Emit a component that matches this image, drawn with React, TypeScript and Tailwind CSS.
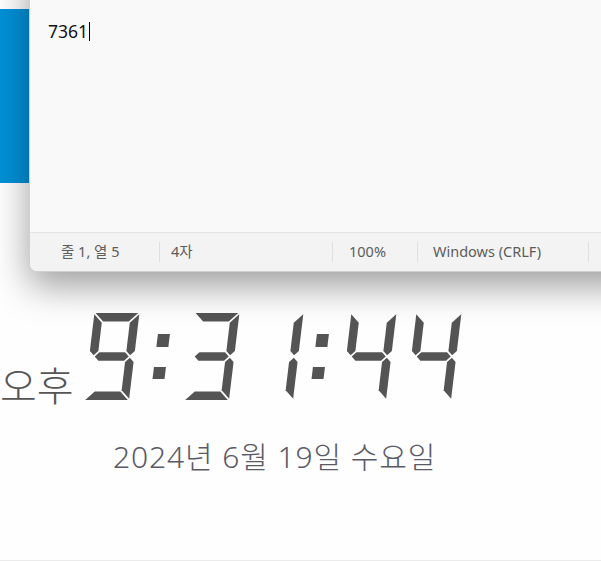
import React from 'react';

// seven-segment geometry (unskewed box w x h), slanted afterwards
const K = 0.12;
const H = 87;
const W = 45;
const T = 8.5;
const G = 1.2;
const SLANT = K * H;

type Seg = 'a' | 'b' | 'c' | 'd' | 'e' | 'f' | 'g';

const segs = (() => {
  const s = T / 2;
  const m = H / 2;
  const w = W;
  const h = H;
  const t = T;
  const g = G;
  const out: Record<Seg, number[][]> = {
    a: [[g, 0], [w - g, 0], [w - t - g, t], [t + g, t]],
    b: [[w, g], [w, m - s - g], [w - s, m - g], [w - t, m - s - g], [w - t, t + g]],
    c: [[w, m + s + g], [w, h - g], [w - t, h - t - g], [w - t, m + s + g], [w - s, m + g]],
    d: [[t + g, h - t], [w - t - g, h - t], [w - g, h], [g, h]],
    e: [[0, m + s + g], [s, m + g], [t, m + s + g], [t, h - t - g], [0, h - g]],
    f: [[0, g], [t, t + g], [t, m - s - g], [s, m - g], [0, m - s - g]],
    g: [[s + g, m], [t + g, m - s], [w - t - g, m - s], [w - s - g, m], [w - t - g, m + s], [t + g, m + s]],
  };
  return out;
})();

const DIGITS: Record<string, Seg[]> = {
  '1': ['b', 'c'],
  '3': ['a', 'b', 'c', 'd', 'g'],
  '4': ['b', 'c', 'f', 'g'],
  '9': ['a', 'b', 'c', 'd', 'f', 'g'],
};

function Digit({ value, className }: { value: string; className?: string }) {
  return (
    <svg
      width={Math.ceil(W + SLANT)}
      height={H}
      viewBox={`0 0 ${Math.ceil(W + SLANT)} ${H}`}
      className={className}
      aria-hidden="true"
    >
      <g transform={`matrix(1 0 ${-K} 1 ${SLANT} 0)`} fill="#545454">
        {DIGITS[value].map((k) => (
          <polygon key={k} points={segs[k].map((p) => p.join(',')).join(' ')} />
        ))}
      </g>
    </svg>
  );
}

function Colon({ className }: { className?: string }) {
  return (
    <svg width={20} height={H} viewBox={`0 0 20 ${H}`} className={className} aria-hidden="true">
      <g transform={`matrix(1 0 ${-K} 1 ${SLANT} 0)`} fill="#545454">
        <rect x={0} y={21} width={12} height={13} />
        <rect x={0} y={54} width={12} height={12} />
      </g>
    </svg>
  );
}

function Divider() {
  return <div className="h-5 w-px shrink-0 bg-[#e0e0e0]" />;
}

function NotepadWindow() {
  return (
    <div className="absolute left-[29px] top-[-40px] flex h-[312px] w-[620px] flex-col overflow-hidden rounded-[8px] border border-[#cfcfcf] bg-[#f9f9f9] shadow-[0_14px_36px_rgba(0,0,0,0.38)]">
      <div className="flex-1 pl-[18px] pt-[58px]">
        <p className="flex items-center text-[17.5px] leading-[24px] text-[#111]">
          7361
          <span className="ml-[1px] inline-block h-[19px] w-px bg-black" />
        </p>
      </div>
      <div className="flex h-[39px] items-center border-t border-[#e5e5e5] bg-[#f3f3f3] text-[14.5px] text-[#5c5c5c]">
        <div className="w-[129px] shrink-0 pl-[31px]">줄 1, 열 5</div>
        <Divider />
        <div className="w-[172px] shrink-0 pl-[11px]">4자</div>
        <Divider />
        <div className="w-[84px] shrink-0 pl-[16px]">100%</div>
        <Divider />
        <div className="w-[170px] shrink-0 pl-[15px]">Windows (CRLF)</div>
        <Divider />
      </div>
    </div>
  );
}

export default function App() {
  return (
    <div className="relative h-[562px] w-[601px] overflow-hidden bg-[#fefefe] font-['Noto_Sans','Noto_Sans_CJK_KR',sans-serif]">
      <div className="flex h-[561px] flex-col border-b border-[#ececec]">
        <div className="mt-[9px] h-[174px] w-[60px] bg-[#0091d8]" />

        <div className="mt-[130px] flex h-[87px] items-end" role="img" aria-label="오후 9:31:44">
          <span className="-mb-[4px] w-[73px] shrink-0 whitespace-nowrap font-['Noto_Sans_CJK_KR',sans-serif] text-[40px] font-light leading-none text-[#555]">
            오후
          </span>
          <Digit value="9" className="ml-[11px] shrink-0" />
          <Colon className="ml-[10px] shrink-0" />
          <Digit value="3" className="ml-[14px] shrink-0" />
          <Digit value="1" className="ml-[8px] shrink-0" />
          <Colon className="ml-[5px] shrink-0" />
          <Digit value="4" className="ml-[12px] shrink-0" />
          <Digit value="4" className="ml-[9px] shrink-0" />
        </div>

        <p className="ml-[113px] mt-[37px] text-[30px] font-light leading-[40px] tracking-[0.9px] text-[#5a5a66]">
          2024년 6월 19일 수요일
        </p>
      </div>

      <NotepadWindow />
    </div>
  );
}
